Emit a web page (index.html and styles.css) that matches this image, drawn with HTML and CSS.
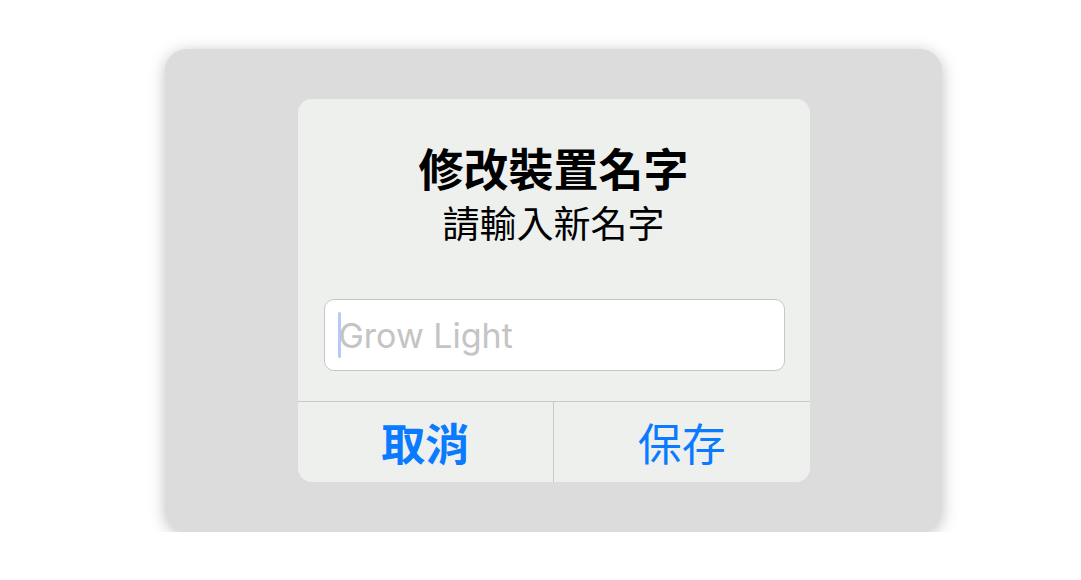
FILE: index.html
```html
<!DOCTYPE html>
<html>
<head>
	<meta charset="utf-8">
	<title>修改裝置名字</title>
	<link rel="stylesheet" href="styles.css">
</head>
<body>
	<div class="screen">
		<div class="dialog">
			<div class="head">
				<div class="title">修改裝置名字</div>
				<div class="sub">請輸入新名字</div>
			</div>
			<div class="field">
				<span class="caret"></span>
				<span class="hint">Grow Light</span>
			</div>
			<div class="btns">
				<div class="btn cancel">取消</div>
				<div class="btn save">保存</div>
			</div>
		</div>
	</div>
</body>
</html>
```

FILE: styles.css
```css
body,div{margin: 0;padding: 0;}
body{
	background: #fff;
	font-family: "Noto Sans CJK TC", "Noto Sans", sans-serif;
	padding: 49px 0 0 165px;
}
.screen{
	width: 777px;
	height: 483px;
	background: #dcdcdc;
	border-radius: 22px;
	box-shadow: 0 3px 16px rgba(0,0,0,0.25);
	display: flex;
	align-items: center;
	justify-content: center;
}
.dialog{
	width: 512px;
	height: 383px;
	background: #eef0ee;
	border-radius: 14px;
	display: flex;
	flex-direction: column;
	overflow: hidden;
}
.head{
	text-align: center;
	padding-top: 41px;
	color: #000;
}
.title{
	font-size: 45px;
	font-weight: 700;
	line-height: 56px;
}
.sub{
	font-size: 37px;
	line-height: 48px;
	margin-top: 2px;
}
/* 输入框 */
.field{
	margin: 53px 25px 0 26px;
	height: 70px;
	background: #fff;
	border: 1px solid #c6c6c6;
	border-radius: 10px;
	display: flex;
	align-items: center;
	padding-left: 13px;
}
.caret{
	width: 3px;
	height: 46px;
	background: #b9c8f6;
	border-radius: 2px;
	margin-right: -2px;
}
.hint{
	font-family: Inter, "Noto Sans", sans-serif;
	font-size: 34px;
	color: #c4c4c4;
}
.btns{
	margin-top: 30px;
	border-top: 1px solid #c9c9c9;
	display: flex;
	flex: 1;
}
.btn{
	flex: 1;
	display: flex;
	align-items: center;
	justify-content: center;
	font-size: 44px;
	color: #0a7aff;
}
.cancel{
	font-weight: 700;
	border-right: 1px solid #c9c9c9;
}
```
